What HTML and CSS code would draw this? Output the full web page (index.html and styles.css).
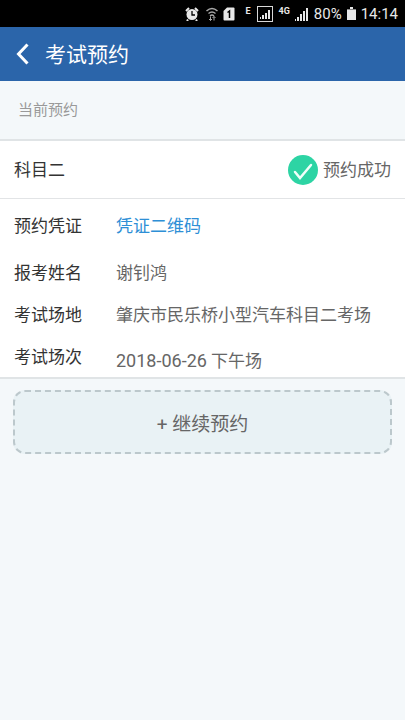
FILE: index.html
```html
<!DOCTYPE html>
<html lang="zh-CN">
<head>
<meta charset="UTF-8">
<meta name="viewport" content="width=device-width, initial-scale=1">
<title>考试预约</title>
<link rel="stylesheet" href="styles.css">
</head>
<body>
    <div class="status-bar">
        <svg class="icon-alarm" width="14" height="14" viewBox="0 0 14 14">
            <path d="M1 4L4 1M13 4L10 1M3 12.500L2 14M11 12.500L12 14" stroke="#e8e8e8" stroke-width="2"/>
            <circle cx="7" cy="7.500" r="5.500" fill="#e8e8e8"/>
            <path d="M7 4v4h3" fill="none" stroke="#000" stroke-width="1.300"/>
        </svg>
        <svg class="icon-wifi" width="12" height="14" viewBox="0 0 12 14" fill="none" stroke="#a8a8a8">
            <path d="M0.500 4Q6 -1 11.500 4" stroke-width="1.500"/>
            <path d="M2.500 6.500Q6 3.500 9.500 6.500" stroke-width="1.300"/>
            <path d="M4 9Q6 7 8 9" stroke-width="1.300"/>
            <path d="M4.500 9.500v4M3 12l1.500 1.500L6 12M8 13.500v-4M6.500 11L8 9.500L9.500 11"/>
        </svg>
        <svg class="icon-sim" width="12" height="14" viewBox="0 0 12 14">
            <path d="M4 0.500h6.500q1 0 1 1v11q0 1-1 1h-9q-1 0-1-1V4z" fill="#e8e8e8"/>
            <path d="M4.500 5.500L6.500 4v7" fill="none" stroke="#000" stroke-width="1.500"/>
        </svg>
        <span class="network network-e">E</span>
        <svg class="icon-signal-box" width="16" height="16" viewBox="0 0 16 16">
            <rect x="0.500" y="0.500" width="15" height="15" fill="none" stroke="#d8d8d8"/>
            <path d="M3 11h1v2H3zM5 9h2v4H5zM8 7h2v6H8zM11 4h2v9h-2z" fill="#e8e8e8"/>
        </svg>
        <span class="network">4G</span>
        <svg class="icon-signal" width="14" height="14" viewBox="0 0 14 14">
            <path d="M0 12h1v2H0zM2 10h2v4H2zM5 7h2v7H5zM8 4h2v10H8zM11 1h2v13h-2z" fill="#e8e8e8"/>
        </svg>
        <span class="status-text">80%</span>
        <svg class="icon-battery" width="9" height="13" viewBox="0 0 9 13">
            <path d="M3 0h3v2h3v11H0V2h3z" fill="#e8e8e8"/>
            <path d="M0 2h9v1H0z" fill="#888"/>
        </svg>
        <span class="status-text">14:14</span>
    </div>

    <header class="header">
        <button class="back" type="button" aria-label="返回">
            <svg width="14" height="22" viewBox="0 0 14 22">
                <path d="M11.500 1.500L2.500 11l9 9.500" fill="none" stroke="#fff" stroke-width="3"/>
            </svg>
        </button>
        <h1>考试预约</h1>
    </header>

    <main>
        <h2 class="section-title">当前预约</h2>

        <section class="card">
            <div class="card-head">
                <span class="subject">科目二</span>
                <span class="result">
                    <svg width="30" height="30" viewBox="0 0 30 30">
                        <circle cx="15" cy="15" r="15" fill="#2dd4a4"/>
                        <path d="M7 17l5 6L23 10" fill="none" stroke="#f0fffa" stroke-width="2.500" stroke-linecap="round"/>
                    </svg>
                    预约成功
                </span>
            </div>
            <dl class="details">
                <div class="row row-first">
                    <dt>预约凭证</dt>
                    <dd><a href="#">凭证二维码</a></dd>
                </div>
                <div class="row">
                    <dt>报考姓名</dt>
                    <dd>谢钊鸿</dd>
                </div>
                <div class="row">
                    <dt>考试场地</dt>
                    <dd>肇庆市民乐桥小型汽车科目二考场</dd>
                </div>
                <div class="row row-last">
                    <dt>考试场次</dt>
                    <dd><time datetime="2018-06-26">2018-06-26</time> 下午场</dd>
                </div>
            </dl>
        </section>

        <button class="add-button" type="button">+ 继续预约</button>
    </main>
</body>
</html>
```
FILE: styles.css
```css
* {
    box-sizing: border-box;
}

body {
    margin: 0;
    min-height: 100vh;
    background-color: #f4f8fa;
    color: #333;
    font-family: Roboto, "Noto Sans CJK SC", sans-serif;
    font-size: 17px;
    line-height: 24px;
}

button {
    font-family: inherit;
    cursor: pointer;
}

.status-bar {
    display: flex;
    align-items: center;
    justify-content: flex-end;
    gap: 5px;
    height: 27px;
    padding-right: 7px;
    background-color: #000;
    color: #e8e8e8;
}

.icon-wifi {
    margin-left: 2px;
}

.network {
    font-size: 9px;
    font-weight: bold;
    line-height: 8px;
    padding-bottom: 6px;
}

.network-e {
    margin: 0 2px 0 5px;
}

.status-text {
    font-size: 15px;
}

.header {
    display: flex;
    align-items: center;
    gap: 15px;
    height: 54px;
    padding: 0 16px;
    background-color: #2b65aa;
    color: #fff;
}

.back {
    display: flex;
    padding: 0;
    border: none;
    background: none;
}

.header h1 {
    margin: 0;
    padding-top: 2px;
    font-size: 21px;
    font-weight: normal;
}

.section-title {
    margin: 0;
    padding: 17px 18px;
    color: #999;
    font-size: 15px;
    font-weight: normal;
}

.card {
    background-color: #fff;
    border-top: 2px solid #e0e4e6;
    border-bottom: 2px solid #e0e4e6;
}

.card-head {
    display: flex;
    align-items: center;
    justify-content: space-between;
    height: 58px;
    padding: 0 14px;
    border-bottom: 1px solid #e2e4e6;
}

.result {
    display: flex;
    align-items: center;
    gap: 5px;
    color: #666;
}

.details {
    margin: 0;
    padding: 0 14px;
}

.row {
    display: grid;
    grid-template-columns: 102px 1fr;
    align-items: center;
    min-height: 42px;
    padding-top: 2px;
}

.row-first {
    min-height: 52px;
}

.row dd {
    margin: 0;
    color: #666;
}

.row a {
    color: #2e8fd6;
    text-decoration: none;
}

.row time {
    font-size: 18px;
}

.row-last dd {
    align-self: end;
    padding-bottom: 4px;
}

.add-button {
    display: block;
    width: calc(100% - 26px);
    height: 64px;
    margin: 11px 13px;
    border: 2px dashed #bcc8cc;
    border-radius: 12px;
    background-color: #e9f2f5;
    color: #666;
    font-size: 19px;
}
```
